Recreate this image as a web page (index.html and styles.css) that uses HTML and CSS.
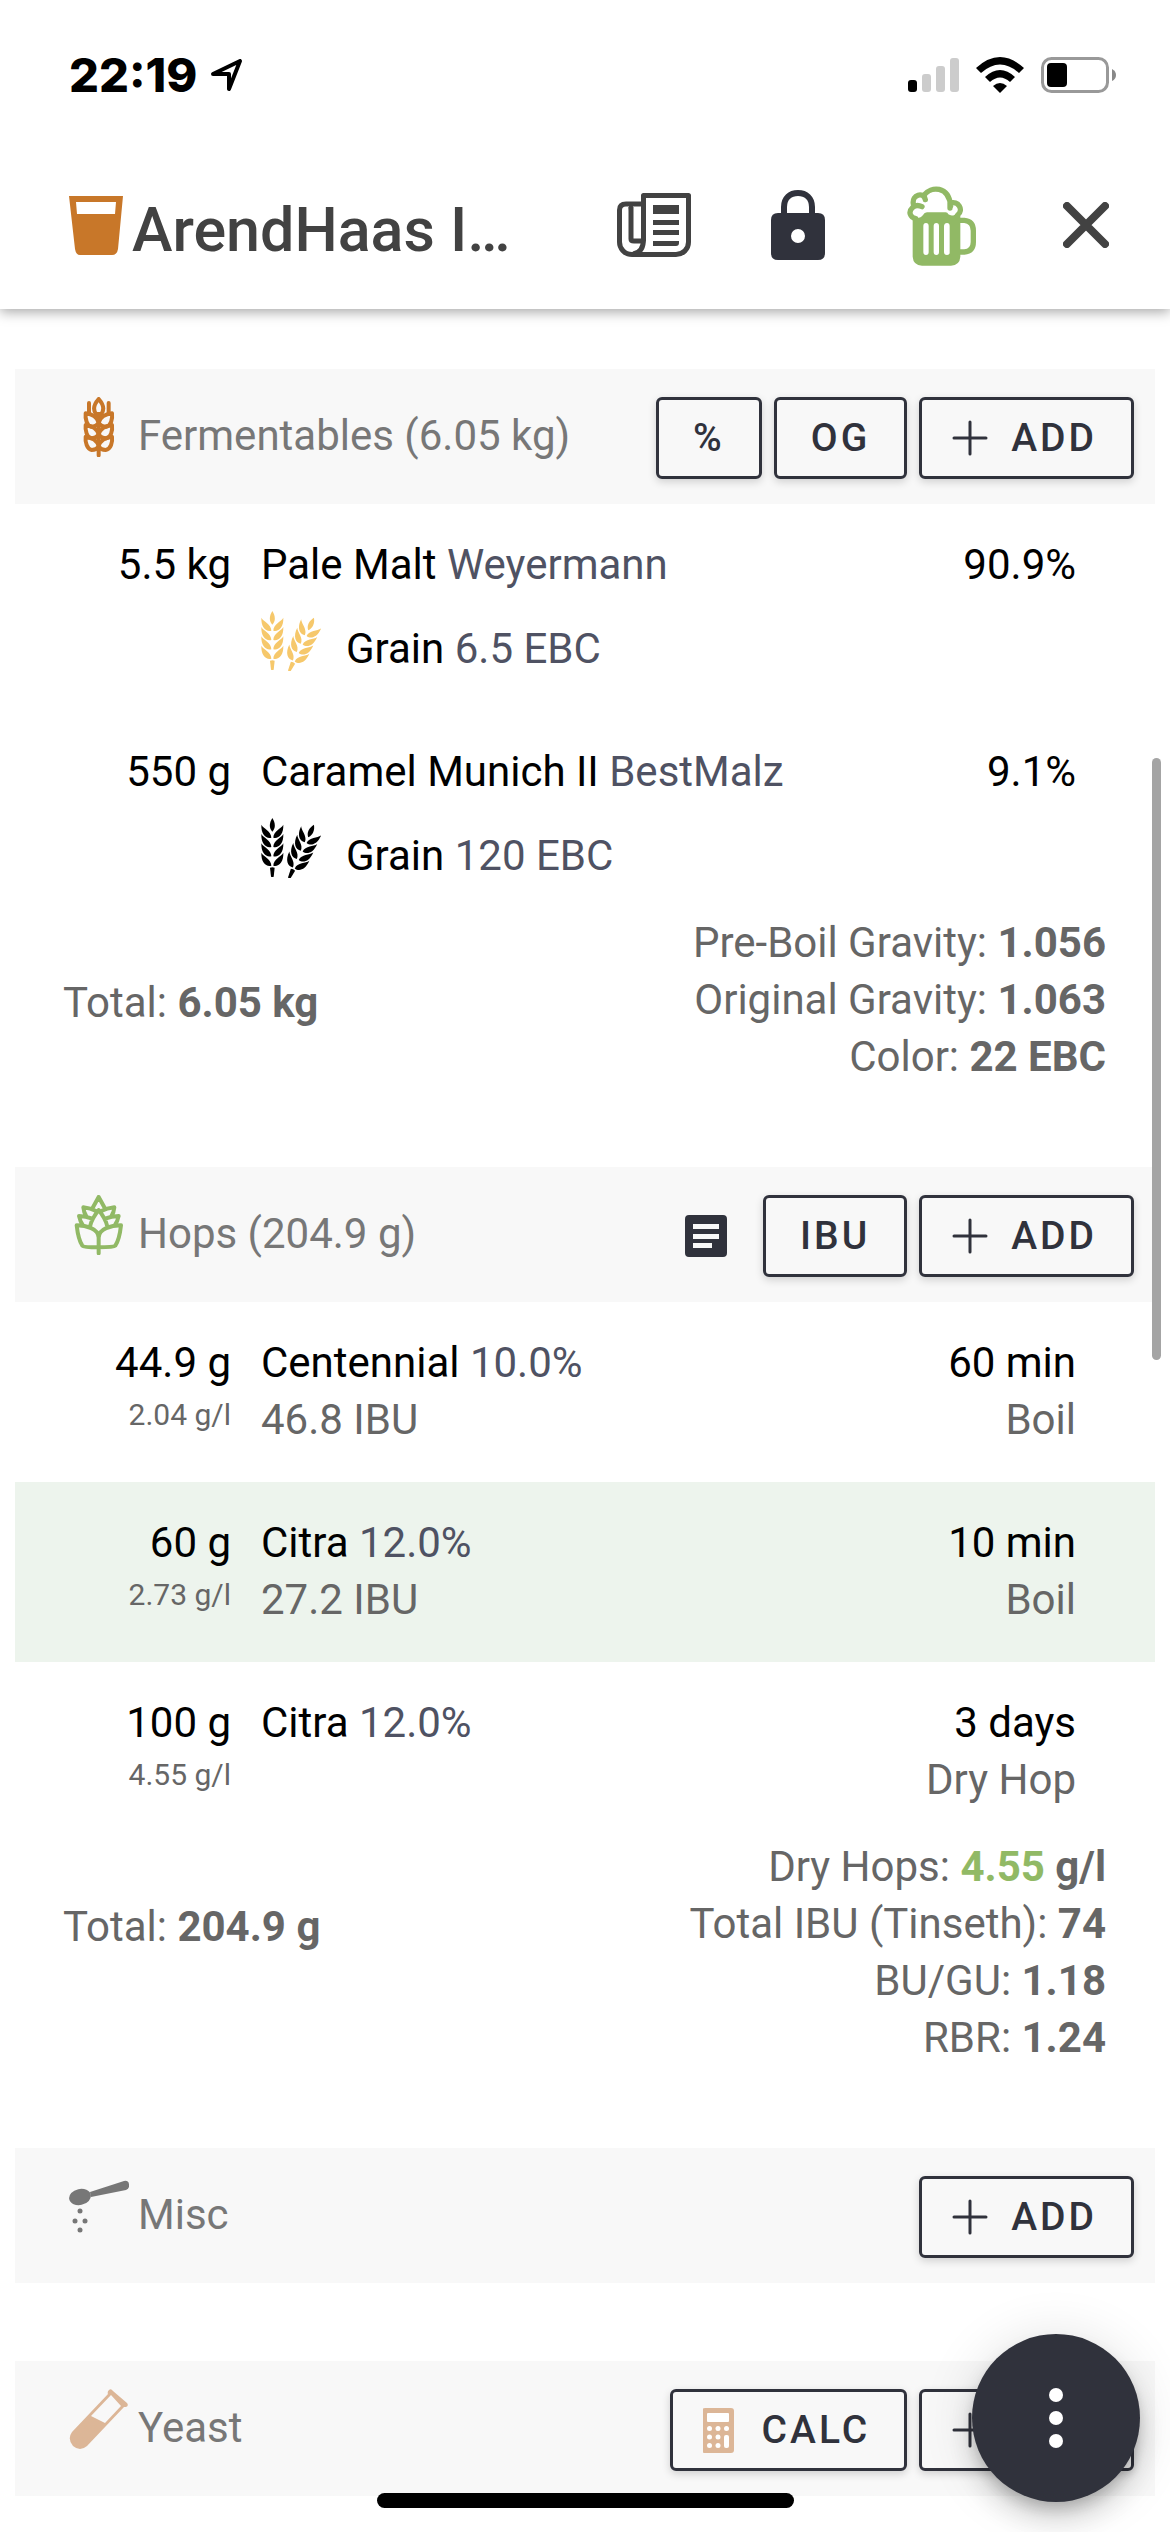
FILE: index.html
```html
<!DOCTYPE html>
<html lang="en">
<head>
<meta charset="utf-8">
<meta name="viewport" content="width=device-width, initial-scale=1">
<title>ArendHaas I…</title>
<link rel="stylesheet" href="styles.css">
</head>
<body>
<svg class="symbols" aria-hidden="true">
  <symbol id="plus" viewBox="0 0 36 36"><path d="M18 2V34M2 18H34" fill="none" stroke="currentColor" stroke-width="3" stroke-linecap="round"/></symbol>
  <symbol id="grain" viewBox="33 27 180 180">
    <g id="ear" fill="currentColor">
      <path d="M67 27C57 42 57 58 67 68C77 58 77 42 67 27Z"/>
      <path id="leaves" d="M34 47C40 59 64 66 64 86C48 90 33 76 34 47ZM100 47C94 59 70 66 70 86C86 90 101 76 100 47Z"/>
      <use href="#leaves" y="28"/><use href="#leaves" y="56"/><use href="#leaves" y="84"/>
      <path d="M60 176Q67 173 74 176L71 203Q67 205 63 203Z"/>
    </g>
    <use href="#ear" transform="translate(118 206) rotate(25) translate(-67 -202)"/>
  </symbol>
</svg>

<header class="app-header">
  <div class="status-bar">
    <div class="status-left">
      <span class="clock">22:19</span>
      <svg class="location" viewBox="0 0 32 32" width="32" height="32" fill="none" stroke="#000" stroke-width="4" stroke-linejoin="round"><path d="M2 15L29 2L18 30V15Z"/></svg>
    </div>
    <div class="status-right">
      <svg viewBox="0 0 51 34" width="51" height="34"><rect y="22" width="9" height="12" rx="3"/><g fill="#ccc"><rect x="14" y="16" width="9" height="18" rx="3"/><rect x="28" y="8" width="9" height="26" rx="3"/><rect x="42" width="9" height="34" rx="3"/></g></svg>
      <svg viewBox="0 0 48 36" width="48" height="36"><path d="M0 11Q24 -11 48 11L43 16Q24 -1 5 16Z"/><path d="M9 20Q24 6 39 20L34 25Q24 16 14 25Z"/><path d="M17 29Q24 23 31 29L24 36Z"/></svg>
      <svg viewBox="0 0 75 36" width="75" height="36"><rect x="1.500" y="1.500" width="65" height="33" rx="9" fill="none" stroke="#999" stroke-width="3"/><rect x="6" y="6" width="20" height="24" rx="4"/><path d="M71 12Q75 14 75 18T71 24Z" fill="#888"/></svg>
    </div>
  </div>
  <div class="toolbar">
    <svg class="beer-glass" viewBox="0 0 54 60" width="54" height="60"><path fill="#c87729" fill-rule="evenodd" d="M0 1H54L49 54Q48 60 43 60H11Q7 60 6 54ZM7 7L8 19H46L47 7Z"/></svg>
    <h1 class="title">ArendHaas I…</h1>
    <button class="tool" type="button" aria-label="Notes">
      <svg viewBox="0 0 74 64" width="74" height="64" fill="none" stroke="#424242" stroke-width="5"><path stroke-linejoin="round" d="M26.500 48V2.500H71.500V49C71.500 56 66 61.500 59 61.500H15C7 61.500 2.500 55 2.500 49V17C2.500 13 5 11 9 11H26"/><path d="M14 14V46Q14 48 17 48H26M26.500 46C26.500 54 24 60 16 61M12 12Q14 12 14 18"/><path fill="#424242" stroke="none" d="M36 12H62V21H36ZM36 27H62V32H36ZM36 37H62V42H36ZM36 48H62V50Q62 53 59 53H36Z"/></svg>
    </button>
    <button class="tool" type="button" aria-label="Lock">
      <svg viewBox="0 0 54 70" width="54" height="70"><path d="M13 26V17C13 8 19 3 27 3S41 8 41 17V26" fill="none" stroke="#30323c" stroke-width="6"/><path fill="#30323c" fill-rule="evenodd" d="M7 23H47Q54 23 54 30V63Q54 70 47 70H7Q0 70 0 63V30Q0 23 7 23ZM27 39A7 7 0 1 0 27 53A7 7 0 1 0 27 39Z"/></svg>
    </button>
    <button class="tool" type="button" aria-label="Brew">
      <svg viewBox="82 27 210 243" width="70" height="81"><g fill="none" stroke="#91b965" stroke-width="16" stroke-linecap="round"><path d="M132 58C154 30 207 28 213 90M211 82C236 72 253 102 234 117M211 82V96M101 84C96 56 132 46 137 71M127 92Q111 84 99 94C84 108 92 124 108 128"/><path d="M242 133H254Q281 135 281 164V198Q281 226 254 228H242"/></g><path fill="#91b965" fill-rule="evenodd" d="M99 120C108 130 124 126 130 117Q134 109 142 109H198Q204 109 206 115C214 121 226 119 233 110L242 120V242Q240 268 214 269H127Q101 268 99 242ZM131 150V228Q131 237 139 237T147 228V150Q147 141 139 141T131 150ZM162 150V228Q162 237 170 237T178 228V150Q178 141 170 141T162 150ZM193 150V228Q193 237 202 237T210 228V150Q210 141 202 141T193 150Z"/></svg>
    </button>
    <button class="tool" type="button" aria-label="Close">
      <svg viewBox="0 0 46 46" width="46" height="46"><path d="M4 4L42 42M42 4L4 42" stroke="#424242" stroke-width="8" stroke-linecap="round"/></svg>
    </button>
  </div>
</header>

<main class="recipe">
  <section>
    <div class="section-bar">
      <svg class="section-icon" viewBox="12 19 180 180" width="60" height="60" fill="none" stroke="#c87729" stroke-width="12" stroke-linecap="round" stroke-linejoin="round"><path d="M101 25C86 42 84 58 93 70H109C118 58 116 42 101 25ZM72 37V66M131 37V66M101 70V194"/><path id="tier" d="M62 68C78 70 96 78 101 96C106 78 124 70 141 68C143 84 138 106 124 108Q108 108 101 96Q94 108 78 108C66 106 60 84 62 68Z"/><use href="#tier" y="35"/><path d="M62 138C78 140 96 148 101 166C106 148 124 140 141 138C143 154 138 176 122 178Q108 178 101 168Q94 178 80 178C66 176 60 154 62 138Z"/></svg>
      <h2>Fermentables (6.05 kg)</h2>
      <div class="actions">
        <button class="btn" type="button">%</button>
        <button class="btn" type="button">OG</button>
        <button class="btn" type="button"><svg width="36" height="36"><use href="#plus"/></svg>ADD</button>
      </div>
    </div>
    <ul class="items">
      <li class="item">
        <div class="amount">5.5 kg</div>
        <div class="name">Pale Malt <span class="soft">Weyermann</span>
          <div class="kind"><svg class="light-malt" width="60" height="60"><use href="#grain"/></svg><span>Grain <span class="soft">6.5 EBC</span></span></div>
        </div>
        <div class="value">90.9%</div>
      </li>
      <li class="item">
        <div class="amount">550 g</div>
        <div class="name">Caramel Munich II <span class="soft">BestMalz</span>
          <div class="kind"><svg width="60" height="60"><use href="#grain"/></svg><span>Grain <span class="soft">120 EBC</span></span></div>
        </div>
        <div class="value">9.1%</div>
      </li>
    </ul>
    <div class="summary">
      <p class="total">Total: <b>6.05 kg</b></p>
      <div class="stats">
        <p>Pre-Boil Gravity: <b>1.056</b></p>
        <p>Original Gravity: <b>1.063</b></p>
        <p>Color: <b>22 EBC</b></p>
      </div>
    </div>
  </section>

  <section>
    <div class="section-bar">
      <svg class="section-icon" viewBox="12 21 180 180" width="60" height="60" fill="none" stroke="#91b965" stroke-width="12" stroke-linecap="round" stroke-linejoin="round"><path d="M84 58L101 27L118 58M101 66C90 80 80 94 76 112M101 66C112 80 122 94 126 112M95 70Q76 60 55 58Q56 72 64 85M107 70Q126 60 148 58Q147 72 139 85M82 92Q62 84 42 84Q45 100 54 112M120 92Q140 84 161 84Q158 100 149 112M101 196V150C102 122 62 112 35 112Q40 156 52 173Q56 178 101 178Q146 178 151 173Q163 156 168 112C140 112 100 122 101 150"/></svg>
      <h2>Hops (204.9 g)</h2>
      <div class="actions">
        <button class="note" type="button" aria-label="Hop notes"><svg viewBox="0 0 42 42" width="42" height="42"><path fill="#30323c" fill-rule="evenodd" d="M4 0H38Q42 0 42 4V38Q42 42 38 42H4Q0 42 0 38V4Q0 0 4 0ZM8 9V14H34V9ZM8 19V24H34V19ZM8 28V33H27V28Z"/></svg></button>
        <button class="btn" type="button">IBU</button>
        <button class="btn" type="button"><svg width="36" height="36"><use href="#plus"/></svg>ADD</button>
      </div>
    </div>
    <ul class="items">
      <li class="item">
        <div class="amount">44.9 g<small>2.04 g/l</small></div>
        <div class="name">Centennial <span class="soft">10.0%</span><p>46.8 IBU</p></div>
        <div class="value">60 min<p>Boil</p></div>
      </li>
      <li class="item selected">
        <div class="amount">60 g<small>2.73 g/l</small></div>
        <div class="name">Citra <span class="soft">12.0%</span><p>27.2 IBU</p></div>
        <div class="value">10 min<p>Boil</p></div>
      </li>
      <li class="item">
        <div class="amount">100 g<small>4.55 g/l</small></div>
        <div class="name">Citra <span class="soft">12.0%</span></div>
        <div class="value">3 days<p>Dry Hop</p></div>
      </li>
    </ul>
    <div class="summary">
      <p class="total">Total: <b>204.9 g</b></p>
      <div class="stats">
        <p>Dry Hops: <b><span class="good">4.55</span> g/l</b></p>
        <p>Total IBU (Tinseth): <b>74</b></p>
        <p>BU/GU: <b>1.18</b></p>
        <p>RBR: <b>1.24</b></p>
      </div>
    </div>
  </section>

  <section>
    <div class="section-bar">
      <svg class="section-icon" viewBox="0 0 60 60" width="60" height="60" fill="#777"><path d="M21 16L55 5Q59 4 60 8Q61 12 57 14L22 21Z"/><ellipse cx="11" cy="21" rx="11" ry="8" transform="rotate(-12 11 21)"/><circle cx="11" cy="35" r="2.500"/><circle cx="6" cy="45" r="2.500"/><circle cx="16" cy="45" r="2.500"/><circle cx="11" cy="54" r="2.500"/></svg>
      <h2>Misc</h2>
      <div class="actions">
        <button class="btn" type="button"><svg width="36" height="36"><use href="#plus"/></svg>ADD</button>
      </div>
    </div>
  </section>

  <section>
    <div class="section-bar">
      <svg class="section-icon" viewBox="0 0 60 60" width="60" height="60"><path fill="#dcb697" fill-rule="evenodd" d="M40 1Q42 -1 44 2L58 14Q60 17 57 18L55 18L18 57Q11 63 4 57Q-2 50 3 43L39 5Q38 3 40 1ZM42 6L22 27L36 34L52 17Z"/></svg>
      <h2>Yeast</h2>
      <div class="actions">
        <button class="btn" type="button"><svg viewBox="2 0 36 45" width="36" height="45"><path fill="#dcb697" d="M4 0H30Q33 0 33 3V42Q33 45 30 45H4Q1 45 1 42V3Q1 0 4 0Z"/><g fill="#fff"><rect x="6" y="5" width="22" height="9" rx="1"/><circle cx="8.500" cy="20.500" r="2.500"/><circle cx="17" cy="20.500" r="2.500"/><circle cx="25.500" cy="20.500" r="2.500"/><circle cx="8.500" cy="29" r="2.500"/><circle cx="17" cy="29" r="2.500"/><circle cx="8.500" cy="37.500" r="2.500"/><circle cx="17" cy="37.500" r="2.500"/><rect x="23" y="27" width="5" height="13" rx="2"/></g></svg>CALC</button>
        <button class="btn" type="button"><svg width="36" height="36"><use href="#plus"/></svg>ADD</button>
      </div>
    </div>
  </section>
</main>

<div class="scroll-thumb"></div>
<button class="fab" type="button" aria-label="More actions"><svg viewBox="0 0 60 60" width="60" height="60" fill="#fff"><circle cx="30" cy="7" r="7"/><circle cx="30" cy="30" r="7"/><circle cx="30" cy="53" r="7"/></svg></button>
<div class="home-indicator"></div>
</body>
</html>
```
FILE: styles.css
```css
* {
  box-sizing: border-box;
}

body {
  margin: 0;
  background: #fff;
  color: #000;
  font: 42px/57px Roboto, sans-serif;
}

h1, h2, p, ul {
  margin: 0;
  padding: 0;
  font-weight: 400;
  list-style: none;
}

b {
  font-weight: 700;
}

svg {
  display: block;
  flex: none;
}

button {
  margin: 0;
  padding: 0;
  border: 0;
  background: none;
  font: inherit;
}

.symbols {
  position: absolute;
  width: 0;
  height: 0;
}

/* Header */
.app-header {
  background: #fff;
  box-shadow: 0 3px 12px rgba(0, 0, 0, .35);
}

.status-bar {
  display: flex;
  justify-content: space-between;
  align-items: center;
  padding: 46px 54px 38px 69px;
}

.status-left,
.status-right {
  display: flex;
  align-items: center;
}

.status-left {
  gap: 14px;
}

.status-right {
  gap: 17px;
}

.clock {
  font: 800 47px/57px Inter, sans-serif;
}

.toolbar {
  display: flex;
  align-items: center;
  height: 168px;
  padding: 0 12px 0 69px;
}

.title {
  flex: 1;
  min-width: 0;
  padding: 10px 0 0 9px;
  color: #424242;
  font-size: 61px;
  font-weight: 500;
  line-height: 72px;
  white-space: nowrap;
}

.tool {
  display: flex;
  flex: none;
  align-items: center;
  justify-content: center;
  width: 144px;
  height: 144px;
}

/* Ingredient sections */
.recipe {
  display: flex;
  flex-direction: column;
  gap: 78px;
  padding: 60px 15px 36px;
}

.section-bar {
  display: flex;
  align-items: flex-start;
  padding: 28px 21px 25px 54px;
  background: #f8f8f8;
}

.section-bar h2 {
  margin-left: 9px;
  color: #777;
  font-size: 42px;
  line-height: 78px;
}

.actions {
  display: flex;
  gap: 12px;
  margin-left: auto;
}

.btn {
  display: flex;
  align-items: center;
  gap: 23px;
  height: 82px;
  padding: 0 34px;
  border: 3px solid #30323c;
  border-radius: 6px;
  box-shadow: 0 3px 8px rgba(0, 0, 0, .16);
  color: #30323c;
  font-size: 39px;
  font-weight: 500;
  letter-spacing: 3px;
}

.btn svg {
  margin-left: -4px;
}

.note {
  display: flex;
  align-items: center;
  padding: 0 24px;
}

.item {
  display: grid;
  grid-template-columns: 216px 1fr auto;
  column-gap: 30px;
  padding: 32px 79px 34px 0;
}

.item:last-child {
  padding-bottom: 30px;
}

.selected {
  background: #edf4ed;
}

.amount,
.value {
  text-align: right;
}

.amount small {
  display: block;
  color: #666;
  font-size: 30px;
  line-height: 48px;
}

.item p {
  color: #666;
}

.soft {
  color: #4f5263;
}

.kind {
  display: flex;
  align-items: flex-end;
  gap: 25px;
  height: 84px;
}

.kind svg {
  margin-bottom: 6px;
}

.light-malt {
  color: #f6c86b;
}

.summary {
  display: flex;
  justify-content: space-between;
  padding: 0 49px 4px 48px;
  color: #666;
}

.total {
  padding-top: 60px;
}

.stats {
  text-align: right;
}

.good {
  color: #91b965;
}

/* Overlays */
.scroll-thumb {
  position: fixed;
  top: 758px;
  right: 9px;
  width: 9px;
  height: 602px;
  border-radius: 5px;
  background: #a4a4a4;
}

.fab {
  position: fixed;
  right: 30px;
  bottom: 30px;
  display: grid;
  place-items: center;
  width: 168px;
  height: 168px;
  border-radius: 50%;
  background: #30323c;
  box-shadow: 0 9px 15px -3px rgba(0, 0, 0, .2), 0 18px 30px rgba(0, 0, 0, .14), 0 3px 54px rgba(0, 0, 0, .12);
}

.home-indicator {
  position: fixed;
  bottom: 24px;
  left: 50%;
  width: 417px;
  height: 15px;
  margin-left: -208px;
  border-radius: 8px;
  background: #000;
}
```
